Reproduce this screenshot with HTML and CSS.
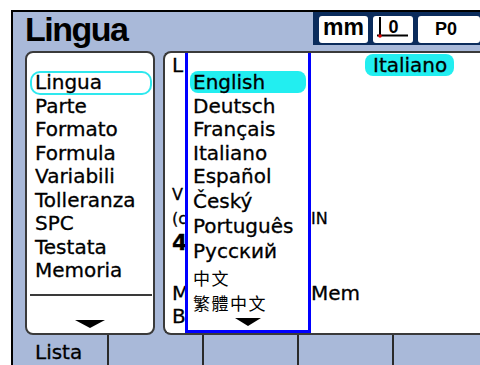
FILE: index.html
```html
<!DOCTYPE html>
<html lang="it">
<head>
<meta charset="utf-8">
<title>Lingua</title>
<link rel="stylesheet" href="styles.css">
</head>
<body>
<div class="device">
  <header class="top">
    <h1 class="title">Lingua</h1>
    <div class="status">
      <span class="chip chip-unit">mm</span>
      <span class="chip chip-zero">
        <svg width="40" height="27" viewBox="0 0 40 27">
          <line x1="7" y1="1" x2="7" y2="20" stroke="#000" stroke-width="2"/>
          <line x1="4" y1="19.5" x2="35" y2="19.5" stroke="#000" stroke-width="2"/>
          <text x="20.5" y="17" text-anchor="middle" class="zero-text">0</text>
          <circle cx="7" cy="20" r="1.8" fill="#e00000"/>
        </svg>
      </span>
      <span class="chip chip-prog">P0</span>
    </div>
  </header>

  <main class="panels">
    <section class="menu">
      <ul class="menu-list">
        <li class="menu-item is-selected">Lingua</li>
        <li class="menu-item">Parte</li>
        <li class="menu-item">Formato</li>
        <li class="menu-item">Formula</li>
        <li class="menu-item">Variabili</li>
        <li class="menu-item">Tolleranza</li>
        <li class="menu-item">SPC</li>
        <li class="menu-item">Testata</li>
        <li class="menu-item">Memoria</li>
      </ul>
      <div class="menu-rule"></div>
      <div class="down-arrow menu-arrow"></div>
    </section>

    <section class="detail">
      <div class="detail-row row-lang">
        <span class="cell-left">L</span>
        <span class="cell-right"><span class="value-pill">Italiano</span></span>
      </div>
      <div class="detail-row row-ver">
        <span class="cell-left">V</span>
        <span class="cell-right"></span>
      </div>
      <div class="detail-row row-copy">
        <span class="cell-left">(c</span>
        <span class="cell-right">IN</span>
      </div>
      <div class="detail-row row-num">
        <span class="cell-left">4</span>
        <span class="cell-right"></span>
      </div>
      <div class="detail-row row-mem">
        <span class="cell-left">M</span>
        <span class="cell-right">Mem</span>
      </div>
      <div class="detail-row row-build">
        <span class="cell-left">B</span>
        <span class="cell-right"></span>
      </div>

      <div class="dropdown">
        <ul class="lang-list">
          <li class="lang-item is-active">English</li>
          <li class="lang-item">Deutsch</li>
          <li class="lang-item">Français</li>
          <li class="lang-item">Italiano</li>
          <li class="lang-item">Español</li>
          <li class="lang-item tall">Český</li>
          <li class="lang-item tall">Português</li>
          <li class="lang-item tall">Русский</li>
          <li class="lang-item tall cjk">中文</li>
          <li class="lang-item tall cjk cjk-tc">繁體中文</li>
        </ul>
        <div class="down-arrow lang-arrow"></div>
      </div>
    </section>
  </main>

  <footer class="softkeys">
    <div class="key">Lista</div>
    <div class="key"></div>
    <div class="key"></div>
    <div class="key"></div>
    <div class="key"></div>
  </footer>
</div>
</body>
</html>
```

FILE: styles.css
```css
html, body {
  margin: 0;
  padding: 0;
  width: 480px;
  height: 365px;
  overflow: hidden;
  background: #ffffff;
}

.device {
  margin: 10px 0 0 11px;
  width: 467px;
  height: 353px;
  border-top: 2px solid #000;
  border-left: 2px solid #000;
  background: #a9b9d9;
  display: flex;
  flex-direction: column;
  font-family: "DejaVu Sans", sans-serif;
  color: #000;
  overflow: hidden;
  -webkit-text-stroke: 0.3px #000;
}

/* ---------- header ---------- */
.top {
  height: 39px;
  display: flex;
  align-items: flex-start;
  flex: none;
}

.title {
  margin: 0;
  padding-left: 12px;
  font-family: "Liberation Sans", Arial, sans-serif;
  font-weight: bold;
  font-size: 34px;
  letter-spacing: -1.5px;
  line-height: 34px;
  -webkit-text-stroke: 0;
}

.status {
  margin-left: auto;
  width: 161px;
  height: 27px;
  padding: 4px 0 2px 6px;
  background: #0b2c5c;
  display: flex;
  gap: 5px;
}

.chip {
  background: #fff;
  border-radius: 3px;
  height: 27px;
  display: block;
  flex: none;
  -webkit-text-stroke: 0;
}

.chip-unit {
  width: 49px;
  text-align: center;
  font-family: "Liberation Sans", Arial, sans-serif;
  font-weight: bold;
  font-size: 23px;
  line-height: 23px;
}

.chip-zero {
  width: 40px;
}

.chip-zero svg {
  display: block;
}

.zero-text {
  font-family: "Liberation Sans", Arial, sans-serif;
  font-weight: bold;
  font-size: 18px;
}

.chip-prog {
  flex: 1;
  padding-left: 17px;
  font-family: "Liberation Sans", Arial, sans-serif;
  font-weight: bold;
  font-size: 18px;
  line-height: 27px;
}

/* ---------- panels ---------- */
.panels {
  height: 284px;
  flex: none;
  display: flex;
  gap: 8px;
  padding-left: 12px;
}

.menu {
  width: 130px;
  box-sizing: border-box;
  background: #fff;
  border: 2px solid #3a3a3a;
  border-radius: 8px;
  display: flex;
  flex-direction: column;
  padding-bottom: 5px;
}

.menu-list,
.lang-list {
  list-style: none;
  margin: 0;
  padding: 18px 0 0 0;
}

.menu-item {
  height: 23.5px;
  line-height: 23.5px;
  font-size: 20px;
  padding-left: 8px;
  white-space: nowrap;
}

.menu-item.is-selected {
  margin: 0 1px 0 3px;
  padding-left: 5px;
  border-radius: 10px;
  box-shadow: inset 0 0 0 2px #2ee8ee;
}

.menu-rule {
  margin: 11px 1px 0 3px;
  height: 2px;
  background: #3a3a3a;
}

.down-arrow {
  width: 0;
  height: 0;
  border-left: 15px solid transparent;
  border-right: 15px solid transparent;
  border-top: 8px solid #000;
  align-self: center;
}

.menu-arrow {
  margin-top: auto;
}

.detail {
  flex: 1;
  position: relative;
  background: #fff;
  border: 2px solid #3a3a3a;
  border-right: none;
  border-radius: 8px 0 0 8px;
}

.detail-row {
  display: grid;
  grid-template-columns: 146px 1fr;
  white-space: nowrap;
}

.cell-left {
  padding-left: 7px;
}

.cell-right {
  overflow: hidden;
}

.row-lang {
  margin-top: 1px;
  height: 22px;
  font-size: 20px;
  line-height: 22px;
}

.value-pill {
  display: inline-block;
  margin-left: 54px;
  padding: 0 7px 0 8px;
  background: #22eef0;
  border-radius: 8px;
  height: 22px;
}

.row-ver {
  margin-top: 109px;
  font-size: 16px;
  line-height: 20px;
}

.row-copy {
  margin-top: 4px;
  font-size: 16px;
  line-height: 20px;
}

.row-num {
  margin-top: 2px;
  font-size: 22px;
  font-weight: bold;
  line-height: 24px;
}

.row-mem {
  margin-top: 27px;
  font-size: 20px;
  line-height: 23px;
}

.row-build {
  margin-top: 0;
  font-size: 20px;
  line-height: 23px;
}

/* dropdown overlay */
.dropdown {
  position: absolute;
  left: 20px;
  top: 0;
  bottom: 0;
  width: 120px;
  background: #fff;
  border: 3px solid #0000ff;
  border-top: none;
  display: flex;
  flex-direction: column;
}

.lang-item {
  height: 23.5px;
  line-height: 23.5px;
  font-size: 20px;
  padding-left: 5px;
  white-space: nowrap;
}

.lang-item.tall {
  height: 25px;
  line-height: 25px;
}

.lang-item.is-active {
  margin: 0 2px;
  padding-left: 3px;
  background: #22eef0;
  border-radius: 8px;
  height: 22px;
  margin-bottom: 1.5px;
}

.lang-item.cjk {
  font-family: "Noto Sans CJK SC", "Noto Sans CJK TC", sans-serif;
  font-size: 17px;
  letter-spacing: 1.5px;
  padding-top: 2px;
  height: 23px;
  line-height: 23px;
  -webkit-text-stroke: 0;
}

.lang-item.cjk-tc {
  font-family: "Noto Sans CJK TC", "Noto Sans CJK SC", sans-serif;
}

.lang-arrow {
  margin-top: 4px;
  border-left-width: 13px;
  border-right-width: 13px;
}

/* ---------- soft keys ---------- */
.softkeys {
  flex: 1;
  display: grid;
  grid-template-columns: 96px 95px 95px 95px 95px;
}

.key {
  border-right: 2px solid #2a2a2a;
  padding: 4px 0 0 22px;
  font-size: 20px;
  line-height: 26px;
}
```
